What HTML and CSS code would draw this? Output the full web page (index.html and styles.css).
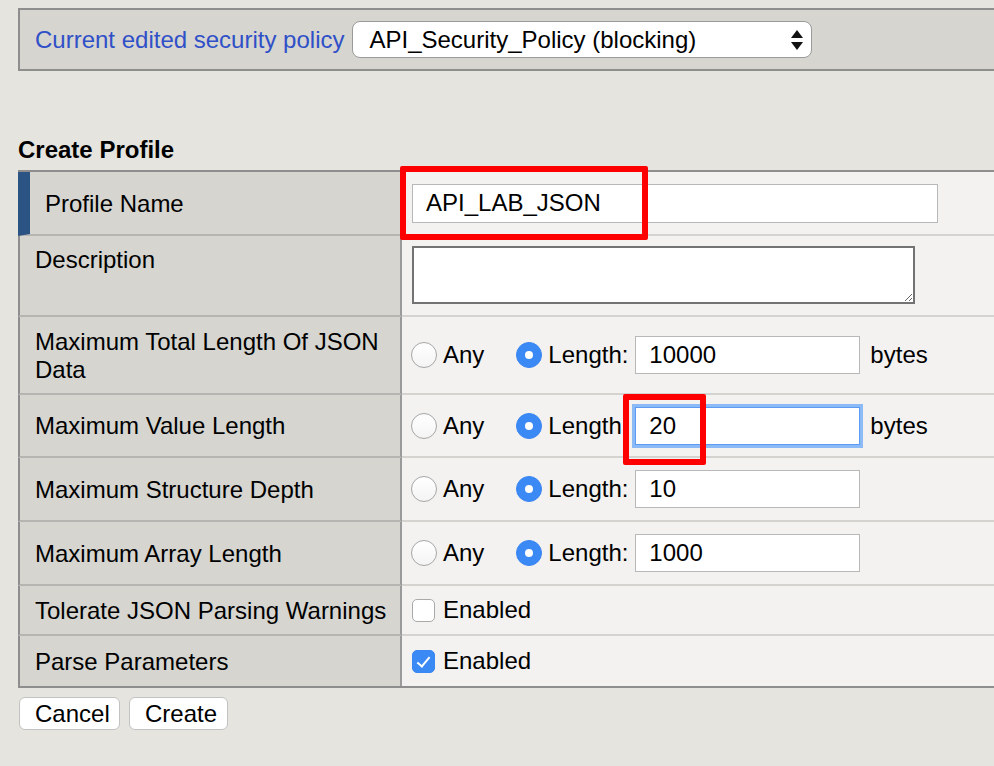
FILE: index.html
```html
<!DOCTYPE html>
<html lang="en">
<head>
<meta charset="utf-8">
<title>Create Profile</title>
<link rel="stylesheet" href="styles.css">
</head>
<body>
<div class="page">
  <div class="policy-bar">
    <span class="policy-label">Current edited security policy</span>
    <div class="select-wrap">
      <select class="policy-select">
        <option>API_Security_Policy (blocking)</option>
      </select>
      <svg class="select-arrows" width="14" height="22" viewBox="0 0 14 22"><path d="M7 1 L13 9 L1 9 Z M7 21 L13 13 L1 13 Z" fill="#111"/></svg>
    </div>
  </div>

  <h2 class="section-title">Create Profile</h2>

  <div class="form">
    <div class="lbl lbl-active r-name">Profile Name</div>
    <div class="val r-name">
      <div class="mark-wrap">
        <input class="text name-input" type="text" value="API_LAB_JSON">
        <span class="red-mark mark-name"></span>
      </div>
    </div>

    <div class="lbl lbl-top r-desc">Description</div>
    <div class="val val-top r-desc"><textarea class="desc"></textarea></div>

    <div class="lbl r-two">Maximum Total Length Of JSON Data</div>
    <div class="val r-two">
      <label class="opt"><input type="radio" name="t" class="radio"><span>Any</span></label>
      <label class="opt opt-len"><input type="radio" name="t" class="radio" checked><span class="len-lbl">Length:</span></label>
      <input class="text len-input" type="text" value="10000">
      <span class="unit">bytes</span>
    </div>

    <div class="lbl r-std r-63">Maximum Value Length</div>
    <div class="val r-std r-63">
      <label class="opt"><input type="radio" name="v" class="radio"><span>Any</span></label>
      <label class="opt opt-len"><input type="radio" name="v" class="radio" checked><span class="len-lbl">Length</span></label>
      <div class="mark-wrap">
        <input class="text len-input focused" type="text" value="20">
        <span class="red-mark mark-value"></span>
      </div>
      <span class="unit">bytes</span>
    </div>

    <div class="lbl r-std">Maximum Structure Depth</div>
    <div class="val r-std">
      <label class="opt"><input type="radio" name="d" class="radio"><span>Any</span></label>
      <label class="opt opt-len"><input type="radio" name="d" class="radio" checked><span class="len-lbl">Length:</span></label>
      <input class="text len-input" type="text" value="10">
    </div>

    <div class="lbl r-std">Maximum Array Length</div>
    <div class="val r-std">
      <label class="opt"><input type="radio" name="a" class="radio"><span>Any</span></label>
      <label class="opt opt-len"><input type="radio" name="a" class="radio" checked><span class="len-lbl">Length:</span></label>
      <input class="text len-input" type="text" value="1000">
    </div>

    <div class="lbl r-chk">Tolerate JSON Parsing Warnings</div>
    <div class="val r-chk">
      <label class="opt"><input type="checkbox" class="check"><span>Enabled</span></label>
    </div>

    <div class="lbl r-chk last">Parse Parameters</div>
    <div class="val r-chk last">
      <label class="opt"><input type="checkbox" class="check" checked><span>Enabled</span></label>
    </div>
  </div>

  <div class="actions">
    <button class="btn btn-cancel">Cancel</button>
    <button class="btn btn-create">Create</button>
  </div>
</div>
</body>
</html>
```

FILE: styles.css
```css
html, body {
  margin: 0;
  padding: 0;
  overflow: hidden;
  background: #e5e4df;
}
body {
  font-family: "Liberation Sans", Arial, sans-serif;
  font-size: 24px;
  color: #000;
}
.page {
  padding: 8px 0 0 18px;
  width: 1020px;
}
.policy-bar {
  box-sizing: border-box;
  height: 63px;
  border: 2px solid #8e8e8e;
  border-right: none;
  background: #d6d5d0;
  display: flex;
  align-items: center;
  padding-left: 15px;
  gap: 8px;
}
.policy-label {
  color: #3050c8;
}
.select-wrap {
  position: relative;
  width: 460px;
  height: 37px;
}
.policy-select {
  appearance: none;
  -webkit-appearance: none;
  box-sizing: border-box;
  width: 100%;
  height: 100%;
  border: 1px solid #9a9a9a;
  border-radius: 8px;
  background: #fff;
  font-family: inherit;
  font-size: 24px;
  color: #000;
  padding: 0 0 0 16px;
  outline: none;
}
.select-arrows {
  position: absolute;
  right: 8px;
  top: 8px;
  pointer-events: none;
}
.section-title {
  margin: 64px 0 5px 0;
  font-size: 24px;
  font-weight: bold;
  line-height: 30px;
}
.form {
  display: grid;
  grid-template-columns: 384px 1fr;
  border-top: 2px solid #8e8e8e;
  border-bottom: 2px solid #8e8e8e;
}
.lbl {
  box-sizing: border-box;
  background: #d6d5d0;
  border-left: 2px solid #8e8e8e;
  border-right: 2px solid #9a9a9a;
  border-bottom: 2px solid #b6b5b1;
  padding: 1px 10px 0 15px;
  display: flex;
  align-items: center;
  line-height: 28px;
}
.lbl-active {
  border-left: 12px solid #2b5383;
}
.lbl-top {
  align-items: flex-start;
  padding-top: 10px;
}
.val {
  box-sizing: border-box;
  background: #f3f2f0;
  border-bottom: 2px solid #d4d3cf;
  padding-left: 9px;
  display: flex;
  align-items: center;
}
.val-top {
  align-items: flex-start;
  padding-top: 10px;
}
.last {
  border-bottom: none;
}
.r-name { height: 64px; }
.r-desc { height: 81px; }
.r-two { height: 78px; }
.r-std { height: 64px; }
.r-63 { height: 63px; }
.r-chk { height: 50px; }

.text {
  box-sizing: border-box;
  border: 1px solid #b8b8b8;
  background: #fff;
  font-family: inherit;
  font-size: 24px;
  color: #000;
  padding: 0 0 0 13px;
  outline: none;
  margin: 0;
}
.name-input {
  width: 526px;
  height: 39px;
  margin-left: 1px;
}
.len-input {
  width: 225px;
  height: 38px;
}
.focused {
  border: 1px solid #5b9bf2;
  box-shadow: 0 0 0 3px #8cbaf6;
}
.desc {
  box-sizing: border-box;
  width: 503px;
  height: 58px;
  border: 2px solid #737373;
  background: #fff;
  margin: 0 0 0 1px;
  resize: both;
  font-family: inherit;
}
.mark-wrap {
  position: relative;
  display: flex;
}
.red-mark {
  position: absolute;
  box-sizing: border-box;
  border: 6px solid #ff0000;
  border-radius: 2px;
  pointer-events: none;
}
.mark-name {
  left: -11px;
  top: -18px;
  width: 248px;
  height: 74px;
}
.mark-value {
  left: -12px;
  top: -13px;
  width: 83px;
  height: 71px;
}
.opt {
  display: flex;
  align-items: center;
  gap: 6px;
}
.opt-len {
  margin-left: 32px;
}
.len-lbl {
  width: 87px;
}
.radio {
  appearance: none;
  -webkit-appearance: none;
  box-sizing: border-box;
  width: 26px;
  height: 26px;
  margin: 0;
  border-radius: 50%;
  border: 1px solid #a6a6a6;
  background: linear-gradient(#ffffff, #f4f4f4);
  display: grid;
  place-items: center;
}
.radio:checked {
  border-color: #3a86f3;
  background: #3b89f5;
}
.radio:checked::after {
  content: "";
  width: 8px;
  height: 8px;
  border-radius: 50%;
  background: #fff;
}
.check {
  appearance: none;
  -webkit-appearance: none;
  box-sizing: border-box;
  width: 23px;
  height: 23px;
  margin: 0 2px 0 1px;
  border-radius: 5px;
  border: 1px solid #a9a9a9;
  background: #fff;
  position: relative;
}
.check:checked {
  border-color: #3a86f3;
  background: #3b89f5;
}
.check:checked::after {
  content: "";
  position: absolute;
  left: 7px;
  top: 3px;
  width: 5px;
  height: 11px;
  border-right: 2px solid #fff;
  border-bottom: 2px solid #fff;
  transform: rotate(40deg);
}
.unit {
  margin-left: 10px;
}
.actions {
  display: flex;
  gap: 9px;
  margin: 9px 0 0 1px;
}
.btn {
  box-sizing: border-box;
  height: 33px;
  border: 1px solid #c2c2c2;
  border-radius: 6px;
  background: #fff;
  font-family: inherit;
  font-size: 24px;
  color: #000;
  padding: 0 15px;
  line-height: 30px;
}
.btn-cancel { width: 101px; }
.btn-create { width: 99px; }
```
